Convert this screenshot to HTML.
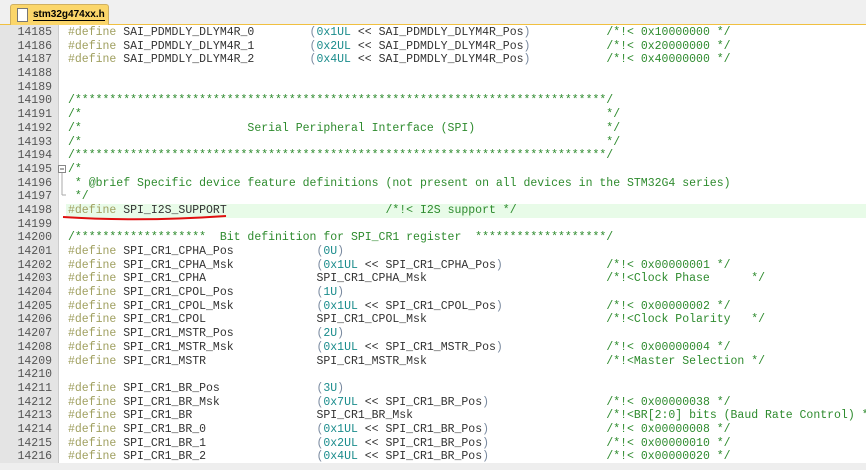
<!DOCTYPE html>
<html><head><style>
body{margin:0;width:866px;height:470px;overflow:hidden;background:#fff;font-family:"Liberation Mono",monospace;}
#tabbar{position:absolute;left:0;top:0;width:866px;height:24px;background:#f0f0f0;border-bottom:1px solid #f0c040;}
#tab{position:absolute;left:10px;top:4px;width:97px;height:20px;background:#fbd66a;border:1px solid #d0b060;border-bottom:none;border-radius:3px 3px 0 0;}
#tab span{position:absolute;left:22px;top:4px;font:bold 10px "Liberation Sans",sans-serif;color:#000;border-bottom:1px solid #000;}
#doc{position:absolute;left:6px;top:3px;width:9px;height:12px;background:#fff;border:1px solid #777;}
#gutter{position:absolute;left:0;top:25px;width:58px;height:445px;background:#e4e4e4;border-right:1px solid #ccc;}
#fold{position:absolute;left:59px;top:25px;width:7px;height:445px;background:#fff;}
#code{position:absolute;left:0;top:26px;width:866px;}
.r{height:13.7px;line-height:13.7px;font-size:11.5px;white-space:pre;position:relative;}
.n{position:absolute;left:0;width:52px;text-align:right;color:#555;}
.c{position:absolute;left:68px;color:#333;}
.hl{position:absolute;left:66px;right:0;top:0;height:13.7px;background:#e8fbe8;}
.d{color:#a0a060}.k{color:#1a8c8c}.m{color:#2e8b2e}.p{color:#7a8aa0}
#bot{position:absolute;left:0;top:463px;width:866px;height:7px;background:#eeeeee;}
</style></head><body>
<div id="tabbar"><div id="tab"><div id="doc"></div><span>stm32g474xx.h</span></div></div>
<div id="gutter"></div><div id="fold"></div>
<div id="code">
<div class="r"><span class="n">14185</span><span class="c"><span class="d">#define</span> SAI_PDMDLY_DLYM4R_0        <span class="p">(</span><span class="k">0x1UL</span> &lt;&lt; SAI_PDMDLY_DLYM4R_Pos<span class="p">)</span>           <span class="m">/*!&lt; 0x10000000 */</span></span></div>
<div class="r"><span class="n">14186</span><span class="c"><span class="d">#define</span> SAI_PDMDLY_DLYM4R_1        <span class="p">(</span><span class="k">0x2UL</span> &lt;&lt; SAI_PDMDLY_DLYM4R_Pos<span class="p">)</span>           <span class="m">/*!&lt; 0x20000000 */</span></span></div>
<div class="r"><span class="n">14187</span><span class="c"><span class="d">#define</span> SAI_PDMDLY_DLYM4R_2        <span class="p">(</span><span class="k">0x4UL</span> &lt;&lt; SAI_PDMDLY_DLYM4R_Pos<span class="p">)</span>           <span class="m">/*!&lt; 0x40000000 */</span></span></div>
<div class="r"><span class="n">14188</span></div>
<div class="r"><span class="n">14189</span></div>
<div class="r"><span class="n">14190</span><span class="c m">/*****************************************************************************/</span></div>
<div class="r"><span class="n">14191</span><span class="c m">/*                                                                            */</span></div>
<div class="r"><span class="n">14192</span><span class="c m">/*                        Serial Peripheral Interface (SPI)                   */</span></div>
<div class="r"><span class="n">14193</span><span class="c m">/*                                                                            */</span></div>
<div class="r"><span class="n">14194</span><span class="c m">/*****************************************************************************/</span></div>
<div class="r"><span class="n">14195</span><span class="c m">/*</span></div>
<div class="r"><span class="n">14196</span><span class="c m"> * @brief Specific device feature definitions (not present on all devices in the STM32G4 series)</span></div>
<div class="r"><span class="n">14197</span><span class="c m"> */</span></div>
<div class="r"><div class="hl"></div><span class="n">14198</span><span class="c"><span class="d">#define</span> SPI_I2S_SUPPORT                       <span class="m">/*!&lt; I2S support */</span></span></div>
<div class="r"><span class="n">14199</span></div>
<div class="r"><span class="n">14200</span><span class="c m">/*******************  Bit definition for SPI_CR1 register  *******************/</span></div>
<div class="r"><span class="n">14201</span><span class="c"><span class="d">#define</span> SPI_CR1_CPHA_Pos            <span class="p">(</span><span class="k">0U</span><span class="p">)</span></span></div>
<div class="r"><span class="n">14202</span><span class="c"><span class="d">#define</span> SPI_CR1_CPHA_Msk            <span class="p">(</span><span class="k">0x1UL</span> &lt;&lt; SPI_CR1_CPHA_Pos<span class="p">)</span>               <span class="m">/*!&lt; 0x00000001 */</span></span></div>
<div class="r"><span class="n">14203</span><span class="c"><span class="d">#define</span> SPI_CR1_CPHA                SPI_CR1_CPHA_Msk                          <span class="m">/*!&lt;Clock Phase      */</span></span></div>
<div class="r"><span class="n">14204</span><span class="c"><span class="d">#define</span> SPI_CR1_CPOL_Pos            <span class="p">(</span><span class="k">1U</span><span class="p">)</span></span></div>
<div class="r"><span class="n">14205</span><span class="c"><span class="d">#define</span> SPI_CR1_CPOL_Msk            <span class="p">(</span><span class="k">0x1UL</span> &lt;&lt; SPI_CR1_CPOL_Pos<span class="p">)</span>               <span class="m">/*!&lt; 0x00000002 */</span></span></div>
<div class="r"><span class="n">14206</span><span class="c"><span class="d">#define</span> SPI_CR1_CPOL                SPI_CR1_CPOL_Msk                          <span class="m">/*!&lt;Clock Polarity   */</span></span></div>
<div class="r"><span class="n">14207</span><span class="c"><span class="d">#define</span> SPI_CR1_MSTR_Pos            <span class="p">(</span><span class="k">2U</span><span class="p">)</span></span></div>
<div class="r"><span class="n">14208</span><span class="c"><span class="d">#define</span> SPI_CR1_MSTR_Msk            <span class="p">(</span><span class="k">0x1UL</span> &lt;&lt; SPI_CR1_MSTR_Pos<span class="p">)</span>               <span class="m">/*!&lt; 0x00000004 */</span></span></div>
<div class="r"><span class="n">14209</span><span class="c"><span class="d">#define</span> SPI_CR1_MSTR                SPI_CR1_MSTR_Msk                          <span class="m">/*!&lt;Master Selection */</span></span></div>
<div class="r"><span class="n">14210</span></div>
<div class="r"><span class="n">14211</span><span class="c"><span class="d">#define</span> SPI_CR1_BR_Pos              <span class="p">(</span><span class="k">3U</span><span class="p">)</span></span></div>
<div class="r"><span class="n">14212</span><span class="c"><span class="d">#define</span> SPI_CR1_BR_Msk              <span class="p">(</span><span class="k">0x7UL</span> &lt;&lt; SPI_CR1_BR_Pos<span class="p">)</span>                 <span class="m">/*!&lt; 0x00000038 */</span></span></div>
<div class="r"><span class="n">14213</span><span class="c"><span class="d">#define</span> SPI_CR1_BR                  SPI_CR1_BR_Msk                            <span class="m">/*!&lt;BR[2:0] bits (Baud Rate Control) */</span></span></div>
<div class="r"><span class="n">14214</span><span class="c"><span class="d">#define</span> SPI_CR1_BR_0                <span class="p">(</span><span class="k">0x1UL</span> &lt;&lt; SPI_CR1_BR_Pos<span class="p">)</span>                 <span class="m">/*!&lt; 0x00000008 */</span></span></div>
<div class="r"><span class="n">14215</span><span class="c"><span class="d">#define</span> SPI_CR1_BR_1                <span class="p">(</span><span class="k">0x2UL</span> &lt;&lt; SPI_CR1_BR_Pos<span class="p">)</span>                 <span class="m">/*!&lt; 0x00000010 */</span></span></div>
<div class="r"><span class="n">14216</span><span class="c"><span class="d">#define</span> SPI_CR1_BR_2                <span class="p">(</span><span class="k">0x4UL</span> &lt;&lt; SPI_CR1_BR_Pos<span class="p">)</span>                 <span class="m">/*!&lt; 0x00000020 */</span></span></div>
</div>
<div id="bot"></div>
<svg style="position:absolute;left:0;top:0" width="866" height="470">
<rect x="58.5" y="165.5" width="7" height="7" fill="#fff" stroke="#888"/><line x1="60" y1="169" x2="64" y2="169" stroke="#555"/>
<line x1="62" y1="173" x2="62" y2="195" stroke="#aaa"/><line x1="62" y1="195" x2="66" y2="195" stroke="#aaa"/>
<path d="M63 217 Q140 222 226 216" stroke="#e01010" stroke-width="2" fill="none"/>
</svg>
</body></html>
